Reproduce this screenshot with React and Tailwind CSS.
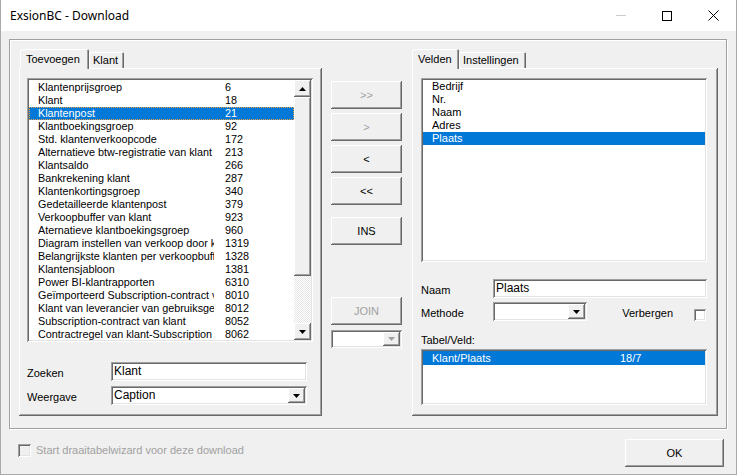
import React from "react";

const raised =
  "shadow-[inset_-1px_-1px_0_#696969,inset_1px_1px_0_#ffffff,inset_-2px_-2px_0_#a0a0a0]";
const sunken =
  "shadow-[inset_1px_1px_0_#a0a0a0,inset_-1px_-1px_0_#ffffff,inset_2px_2px_0_#696969,inset_-2px_-2px_0_#e3e3e3]";

const klantItems = [
  ["Klantenprijsgroep", "6"],
  ["Klant", "18"],
  ["Klantenpost", "21"],
  ["Klantboekingsgroep", "92"],
  ["Std. klantenverkoopcode", "172"],
  ["Alternatieve btw-registratie van klant", "213"],
  ["Klantsaldo", "266"],
  ["Bankrekening klant", "287"],
  ["Klantenkortingsgroep", "340"],
  ["Gedetailleerde klantenpost", "379"],
  ["Verkoopbuffer van klant", "923"],
  ["Aternatieve klantboekingsgroep", "960"],
  ["Diagram instellen van verkoop door klant", "1319"],
  ["Belangrijkste klanten per verkoopbuffer", "1328"],
  ["Klantensjabloon", "1381"],
  ["Power BI-klantrapporten", "6310"],
  ["Geïmporteerd Subscription-contract van klant", "8010"],
  ["Klant van leverancier van gebruiksgegevens", "8012"],
  ["Subscription-contract van klant", "8052"],
  ["Contractregel van klant-Subscription", "8062"],
];

const velden = ["Bedrijf", "Nr.", "Naam", "Adres", "Plaats"];

const Arrow = ({ dir = "down", color = "#000000" }) => (
  <svg width="7" height="4" viewBox="0 0 7 4">
    {dir === "down" ? (
      <path d="M0 0H7L3.5 4Z" fill={color} />
    ) : (
      <path d="M3.5 0L7 4H0Z" fill={color} />
    )}
  </svg>
);

const DropButton = ({ disabled }) => (
  <div className={`w-[17px] h-full flex items-center justify-center bg-[#f0f0f0] ${raised}`}>
    <Arrow color={disabled ? "#a0a0a0" : "#000000"} />
  </div>
);

const Button = ({ label, disabled, className = "" }) => (
  <div
    className={`w-[71px] h-[28px] flex items-center justify-center bg-[#f0f0f0] ${raised} ${
      disabled ? "text-[#a0a0a0]" : "text-black"
    } ${className}`}
  >
    {label}
  </div>
);

const Tab = ({ label, active, width, pl }) => (
  <div
    className={`flex items-center bg-[#f0f0f0] rounded-t-[2px] shadow-[inset_1px_1px_0_#ffffff,inset_-1px_0_0_#696969,inset_-2px_0_0_#a0a0a0] ${
      active ? "relative z-10 h-[20px] -mb-[1px]" : "h-[16px]"
    } ${width} ${pl}`}
  >
    {label}
  </div>
);

export default function App() {
  return (
    <div className="w-[737px] h-[475px] bg-[#f0f0f0] border-x border-b border-[#aaaaaa] flex flex-col overflow-hidden font-['Liberation_Sans',Arial,sans-serif] text-[11px] leading-[13px] text-black">
      {/* title bar */}
      <div className="h-[31px] shrink-0 bg-white flex items-center">
        <span className="ml-[9px] font-['Noto_Sans',sans-serif] text-[12px]">ExsionBC - Download</span>
        <div className="ml-auto flex h-full">
          <div className="w-[46px] flex items-center justify-center">
            <div className="w-[10px] h-px bg-[#cccccc]" />
          </div>
          <div className="w-[46px] flex items-center justify-center">
            <div className="w-[10px] h-[10px] border border-black" />
          </div>
          <div className="w-[46px] flex items-center justify-center">
            <svg width="11" height="11" viewBox="0 0 11 11">
              <path d="M0.5 0.5L10.5 10.5M10.5 0.5L0.5 10.5" stroke="#000000" strokeWidth="1" />
            </svg>
          </div>
        </div>
      </div>

      {/* frame */}
      <div className="ml-[8px] mt-[8px] w-[718px] h-[390px] shrink-0 border border-[#a0a0a0] shadow-[inset_1px_1px_0_#ffffff,1px_1px_0_#ffffff] flex pl-[9px] pt-[10px]">
        {/* left tab control */}
        <div className="w-[303px] flex flex-col">
          <div className="h-[18px] flex items-end pl-[1px]">
            <Tab label="Toevoegen" active width="w-[69px]" pl="pl-[6px]" />
            <Tab label="Klant" width="w-[35px]" pl="pl-[4px]" />
          </div>
          <div className={`h-[348px] bg-[#f0f0f0] pl-[8px] pt-[10px] ${raised}`}>
            <div className={`w-[286px] h-[264px] bg-white p-[2px] flex ${sunken}`}>
              <div className="flex-1 pt-[1px] overflow-hidden text-[10.8px]">
                {klantItems.map(([name, num], i) => (
                  <div
                    key={num}
                    className={`h-[13px] flex items-center pl-[9px] ${
                      i === 2
                        ? "bg-[#0078d7] text-white outline outline-1 outline-dotted outline-[#f0a040] -outline-offset-1"
                        : ""
                    }`}
                  >
                    <div className="w-[176px] shrink-0 overflow-hidden whitespace-nowrap">{name}</div>
                    <div className="ml-[11px]">{num}</div>
                  </div>
                ))}
              </div>
              <div className="w-[17px] flex flex-col">
                <div className={`h-[17px] flex items-center justify-center bg-[#f0f0f0] ${raised}`}>
                  <Arrow dir="up" />
                </div>
                <div className={`h-[179px] bg-[#f0f0f0] ${raised}`} />
                <div className="flex-1 bg-[repeating-conic-gradient(#ffffff_0%_25%,#e6e6e6_0%_50%)] bg-[length:2px_2px]" />
                <div className={`h-[17px] flex items-center justify-center bg-[#f0f0f0] ${raised}`}>
                  <Arrow />
                </div>
              </div>
            </div>

            <div className="mt-[20px] flex items-center">
              <div className="w-[84px] pt-[3px]">Zoeken</div>
              <div className={`w-[196px] h-[19px] bg-white pl-[3px] flex items-center text-[12px] ${sunken}`}>
                Klant
              </div>
            </div>
            <div className="mt-[5px] flex items-center">
              <div className="w-[84px] pt-[3px]">Weergave</div>
              <div className={`w-[196px] h-[19px] bg-white p-[2px] flex items-center text-[12px] ${sunken}`}>
                <span className="flex-1 pl-[1px]">Caption</span>
                <DropButton />
              </div>
            </div>
          </div>
        </div>

        {/* middle buttons */}
        <div className="w-[71px] ml-[9px] mt-[31px] flex flex-col">
          <Button label="&gt;&gt;" disabled />
          <Button label="&gt;" disabled className="mt-[4px]" />
          <Button label="&lt;" className="mt-[4px]" />
          <Button label="&lt;&lt;" className="mt-[4px]" />
          <Button label="INS" className="mt-[12px]" />
          <Button label="JOIN" disabled className="mt-[52px]" />
          <div className={`mt-[5px] h-[18px] bg-white p-[2px] flex justify-end ${sunken}`}>
            <DropButton disabled />
          </div>
        </div>

        {/* right tab control */}
        <div className="w-[306px] ml-[10px] flex flex-col">
          <div className="h-[18px] flex items-end">
            <Tab label="Velden" active width="w-[47px]" pl="pl-[6px]" />
            <Tab label="Instellingen" width="w-[67px]" pl="pl-[4px]" />
          </div>
          <div className={`h-[348px] bg-[#f0f0f0] pl-[9px] pt-[10px] ${raised}`}>
            <div className={`w-[286px] h-[184px] bg-white p-[2px] ${sunken}`}>
              {velden.map((v, i) => (
                <div
                  key={v}
                  className={`h-[13px] flex items-center pl-[9px] ${
                    i === 4 ? "bg-[#0078d7] text-white" : ""
                  }`}
                >
                  {v}
                </div>
              ))}
            </div>

            <div className="mt-[17px] flex items-center">
              <div className="w-[72px] pt-[3px]">Naam</div>
              <div className={`w-[214px] h-[19px] bg-white pl-[3px] flex items-center text-[12px] ${sunken}`}>
                Plaats
              </div>
            </div>
            <div className="mt-[4px] flex items-center w-[286px]">
              <div className="w-[72px] pt-[3px]">Methode</div>
              <div className={`w-[94px] h-[19px] bg-white p-[2px] flex justify-end ${sunken}`}>
                <DropButton />
              </div>
              <div className="ml-auto pt-[3px]">Verbergen</div>
              <div className={`ml-[21px] mr-[1px] mt-[6px] w-[12px] h-[12px] bg-white ${sunken}`} />
            </div>

            <div className="mt-[13px] h-[13px]">Tabel/Veld:</div>
            <div className={`mt-[2px] w-[286px] h-[56px] bg-white p-[2px] ${sunken}`}>
              <div className="h-[14px] flex items-center pl-[9px] bg-[#0078d7] text-white">
                <div className="w-[188px]">Klant/Plaats</div>
                <div>18/7</div>
              </div>
            </div>
          </div>
        </div>
      </div>

      {/* bottom */}
      <div className="flex items-start">
        <div className={`ml-[17px] mt-[15px] w-[13px] h-[13px] bg-[#f0f0f0] ${sunken}`} />
        <div className="ml-[5px] mt-[15px] text-[11px] text-[#a0a0a0]">
          Start draaitabelwizard voor deze download
        </div>
        <div
          className={`ml-auto mr-[12px] mt-[10px] w-[99px] h-[28px] flex items-center justify-center bg-[#f0f0f0] ${raised}`}
        >
          OK
        </div>
      </div>
    </div>
  );
}
